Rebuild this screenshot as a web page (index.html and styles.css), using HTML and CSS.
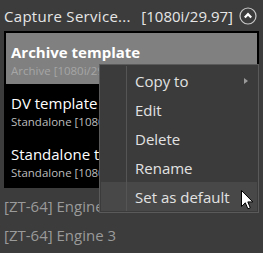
FILE: index.html
```html
<!DOCTYPE html>
<html>
<head>
<meta charset="utf-8">
<link rel="stylesheet" href="styles.css">
</head>
<body>
<div class="panel">
  <div class="header">
    <span class="title">Capture Service...</span>
    <span class="format">[1080i/29.97]</span>
    <svg class="collapse" width="18" height="18" viewBox="0 0 18 18">
      <circle cx="9" cy="9" r="8" fill="none" stroke="#c8c8c8" stroke-width="1.2"/>
      <path d="M5.8 10.6 L9 7.2 L12.2 10.6" fill="none" stroke="#ffffff" stroke-width="2.2" stroke-linejoin="miter"/>
    </svg>
  </div>
  <div class="list">
    <div class="item selected">
      <div class="item-title">Archive template</div>
      <div class="item-sub">Archive [1080i/29.97]</div>
    </div>
    <div class="item">
      <div class="item-title">DV template</div>
      <div class="item-sub">Standalone [1080i/29.97]</div>
    </div>
    <div class="item">
      <div class="item-title">Standalone template</div>
      <div class="item-sub">Standalone [1080i/29.97]</div>
    </div>
  </div>
  <div class="engine">[ZT-64] Engine 2</div>
  <div class="engine">[ZT-64] Engine 3</div>

  <div class="menu">
    <div class="menu-row"><span class="gutter"></span><span class="label">Copy to</span><span class="arrow"></span></div>
    <div class="menu-row"><span class="gutter"></span><span class="label">Edit</span></div>
    <div class="menu-row"><span class="gutter"></span><span class="label">Delete</span></div>
    <div class="menu-row"><span class="gutter"></span><span class="label">Rename</span></div>
    <div class="menu-row hover"><span class="gutter"></span><span class="label">Set as default</span></div>
  </div>

  <svg class="cursor" width="13" height="20" viewBox="0 0 13 20">
    <path d="M0.5 0.5 L0.5 16.5 L4.3 12.8 L6.9 18.8 L9.3 17.8 L6.8 11.9 L11.8 11.9 Z" fill="#ffffff" stroke="#000000" stroke-width="1" stroke-linejoin="miter"/>
  </svg>
</div>
</body>
</html>
```

FILE: styles.css
```css
html, body {
  margin: 0;
  padding: 0;
}
body {
  background: #3c3c3c;
  font-family: "Open Sans", "Noto Sans", sans-serif;
  width: 263px;
  height: 253px;
  overflow: hidden;
}
.panel {
  position: relative;
  width: 263px;
  height: 253px;
}
.header {
  display: flex;
  align-items: center;
  height: 31px;
  padding: 0 4px;
  color: #e6e6e6;
  font-size: 15px;
}
.title {
  flex: 1;
  white-space: nowrap;
  letter-spacing: 0.3px;
}
.format {
  white-space: nowrap;
}
.collapse {
  margin-left: 6px;
  margin-right: 2px;
}
.list {
  margin: 0 4px;
  border: 2px solid #000;
  background: #000;
  display: flex;
  flex-direction: column;
}
.item {
  height: 51px;
  padding-left: 5px;
  padding-top: 3px;
  box-sizing: border-box;
  display: flex;
  flex-direction: column;
  justify-content: center;
  gap: 1px;
  white-space: nowrap;
  overflow: hidden;
}
.item.selected {
  background: #808080;
}
.item-title {
  color: #ffffff;
  font-size: 15px;
  line-height: 20px;
}
.selected .item-title {
  font-weight: 700;
}
.item-sub {
  color: #bdbdbd;
  font-size: 11.5px;
  line-height: 16px;
}
.selected .item-sub {
  color: #a6a6a6;
}
.engine {
  height: 29px;
  line-height: 29px;
  padding-left: 4px;
  color: #9a9a9a;
  font-size: 15px;
  white-space: nowrap;
}
.list + .engine {
  margin-top: 4px;
}
.menu {
  position: absolute;
  left: 99px;
  top: 64px;
  width: 158px;
  border: 1px solid #5a5a5a;
  background: #3b3b3b;
  padding: 1px 0;
  display: flex;
  flex-direction: column;
}
.menu-row {
  display: flex;
  align-items: center;
  height: 29px;
  color: #e2e2e2;
  font-size: 15px;
}
.menu-row.hover {
  background: #484848;
  margin: 0 1px;
}
.gutter {
  width: 26px;
  align-self: stretch;
  border-right: 1px solid #555555;
}
.menu-row.hover .gutter {
  width: 25px;
}
.label {
  flex: 1;
  padding-left: 8px;
  white-space: nowrap;
}
.arrow {
  width: 0;
  height: 0;
  border-top: 3px solid transparent;
  border-bottom: 3px solid transparent;
  border-left: 4px solid #9a9a9a;
  margin-right: 10px;
}
.cursor {
  position: absolute;
  left: 241px;
  top: 190px;
}
```
